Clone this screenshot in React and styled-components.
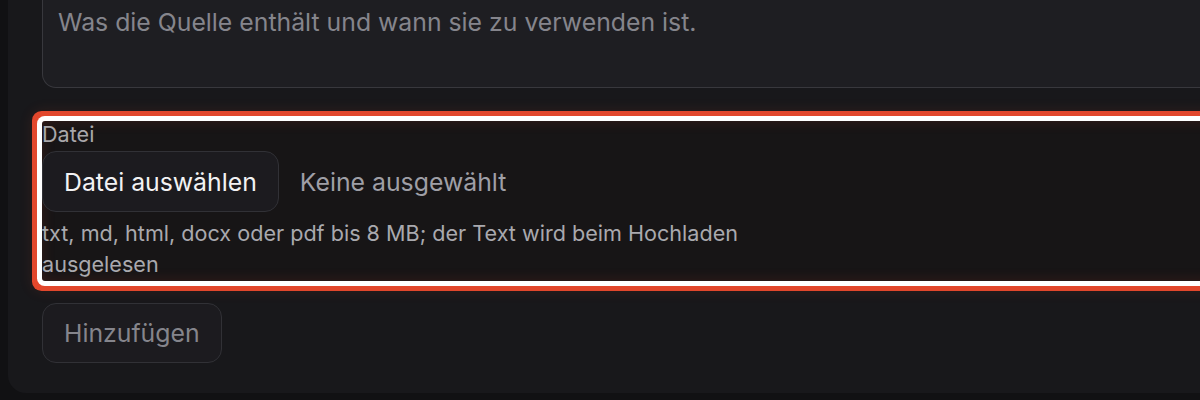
import React from 'react';
import styled, { createGlobalStyle } from 'styled-components';

const Global = createGlobalStyle`
  html, body {
    margin: 0;
    background: #111113;
    overflow: hidden;
  }
  body {
    font-family: Inter, "Noto Sans", sans-serif;
  }
`;

const Card = styled.div`
  margin-left: 8px;
  width: 1400px;
  background: #18181b;
  border-radius: 0 0 0 18px;
  padding: 0 0 30px 34px;
  display: flex;
  flex-direction: column;
`;

const TextArea = styled.textarea`
  box-sizing: border-box;
  height: 88px;
  width: 100%;
  resize: none;
  background: #1e1e22;
  border: 1px solid #38383d;
  border-top: none;
  border-radius: 0 0 14px 14px;
  padding: 6px 15px;
  font-family: inherit;
  font-size: 24.8px;
  line-height: 32px;
  color: #e6e6e8;
  outline: none;
  &::placeholder {
    color: #85858c;
  }
`;

const Field = styled.div`
  margin-top: 33px;
  height: 160px;
  display: flex;
  flex-direction: column;
  border-radius: 3px;
  background: #171516;
  box-shadow: 0 0 0 5px #ffffff, 0 0 0 10px #e2472c,
    0 0 14px 10px rgba(226, 71, 44, 0.12),
    inset 0 0 14px rgba(226, 71, 44, 0.16);
`;

const Label = styled.label`
  font-size: 21.6px;
  line-height: 26px;
  color: #a9a7aa;
`;

const FileRow = styled.div`
  margin-top: 4px;
  display: flex;
  align-items: center;
  gap: 21px;
`;

const Button = styled.button`
  box-sizing: border-box;
  height: ${(p) => p.$h || 61}px;
  padding: 0 21px;
  background: #1c1b1f;
  border: 1px solid #313136;
  border-radius: 14px;
  font-family: inherit;
  font-size: 24.8px;
  color: ${(p) => (p.disabled ? '#85858c' : '#f2f2f3')};
  cursor: pointer;
`;

const FileName = styled.span`
  font-size: 24.8px;
  color: #9f9fa6;
`;

const Help = styled.p`
  margin: 6px 0 0;
  max-width: 760px;
  font-size: 21.6px;
  line-height: 31px;
  color: #a9a9ae;
`;

const Actions = styled.div`
  margin-top: 22px;
  display: flex;
`;

export default function App() {
  return (
    <>
      <Global />
      <Card>
        <TextArea placeholder="Was die Quelle enthält und wann sie zu verwenden ist." />
        <Field>
          <Label>Datei</Label>
          <FileRow>
            <Button type="button">Datei auswählen</Button>
            <FileName>Keine ausgewählt</FileName>
          </FileRow>
          <Help>
            txt, md, html, docx oder pdf bis 8 MB; der Text wird beim Hochladen
            ausgelesen
          </Help>
        </Field>
        <Actions>
          <Button type="button" disabled $h={60}>
            Hinzufügen
          </Button>
        </Actions>
      </Card>
    </>
  );
}
